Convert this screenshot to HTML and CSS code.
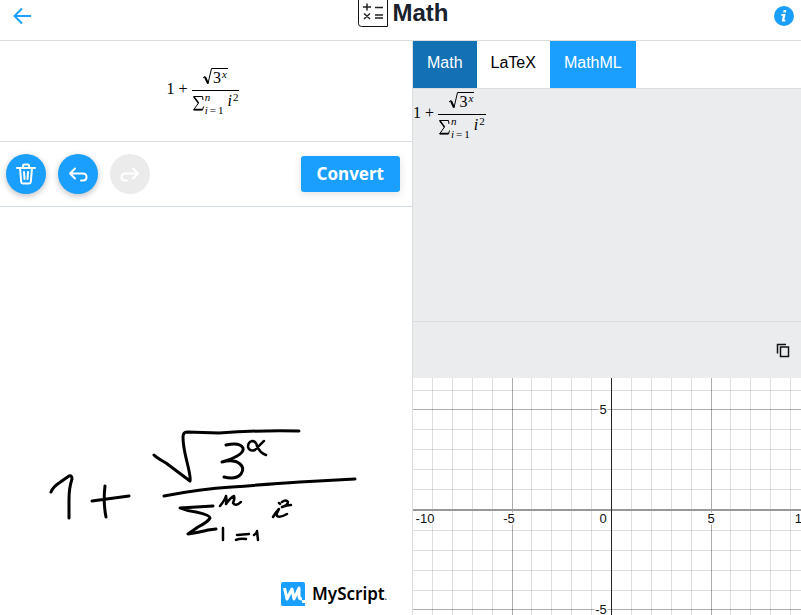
FILE: index.html
```
<!DOCTYPE html>
<html lang="en">
<head>
<meta charset="utf-8">
<title>Math</title>
<link rel="stylesheet" href="styles.css">
</head>
<body>
<header class="topbar">
  <a class="back" href="#" aria-label="Back">
    <svg width="18" height="18" viewBox="0 0 18 18"><path d="M18 9H1.500M9 1.500L1.500 9L9 16.500"/></svg>
  </a>
  <h1 class="title">
    <svg width="30" height="27" viewBox="0 0 30 27"><path class="frame" d="M.5 0V23.500Q.5 26.500 3.500 26.500H29.500V0"/><path d="M5 7H13M9 3.500V10.500M17 7.500H25M6 13.500L12 19M12 13.500L6 19M17 15H25M17 18H25"/></svg>
    <span>Math</span>
  </h1>
  <button class="info" type="button" aria-label="Information">
    <svg width="20" height="20" viewBox="0 0 20 20"><circle cx="10" cy="10" r="10"/><path d="M9.700 4H12.300L11.800 6.400H9.200ZM7.500 8H11.600L10.300 13.700H11.500L11.200 15.400H7.700L8.800 9.700H7.200Z"/></svg>
  </button>
</header>
<main class="workspace">
  <section class="editor">
    <div class="preview">
      <div class="formula">
        <span>1</span><span>+</span>
        <div class="fraction">
          <div class="root"><svg width="9" height="17" viewBox="0 0 9 17"><path d="M0 10L2 8.500L5 15.500L8.500 .5H9"/><path class="heavy" d="M2 9L5 15.500"/></svg><span class="radicand">3<sup>x</sup></span></div>
          <div class="series"><svg class="sigma" width="11" height="15" viewBox="0 0 11 15"><path d="M10 4L9.500 .5H.5L5.500 7L.5 14H9.500L10.500 10.500"/><path class="heavy" d="M1 1L5.500 7M1 13.500H9.500"/></svg><span class="limits"><i>n</i><span class="lower"><i>i</i><span>=</span><span>1</span></span></span><span class="term"><i>i</i><sup>2</sup></span></div>
        </div>
      </div>
    </div>
    <div class="toolbar">
      <button class="round" type="button" aria-label="Clear"><svg width="24" height="24" viewBox="0 0 24 24"><path d="M3 6H21M9 6V4Q9 2.500 10.500 2.500H13.500Q15 2.500 15 4V6M6 6L7.200 20Q7.300 21.500 9 21.500H15Q16.700 21.500 16.800 20L18 6M10 10L10.500 17M14 10L13.500 17"/></svg></button>
      <button class="round" type="button" aria-label="Undo"><svg width="24" height="24" viewBox="0 0 24 24"><path d="M9 6.500L4 11.500L9 16.500M4 11.500H17Q20.500 11.500 20.500 15Q20.500 18.500 17 18.500H15"/></svg></button>
      <button class="round" type="button" aria-label="Redo" disabled><svg width="24" height="24" viewBox="0 0 24 24"><path d="M15 6.500L20 11.500L15 16.500M20 11.500H7Q3.500 11.500 3.500 15Q3.500 18.500 7 18.500H9"/></svg></button>
      <button class="convert" type="button">Convert</button>
    </div>
    <div class="ink">
      <svg class="strokes" viewBox="0 207 412 408" preserveAspectRatio="xMinYMin meet">
        <path d="M51 492Q53 487 59 483L69 476Q72 475 72 479Q69 488 69 499L69 518"/>
        <path d="M92 501L129 496M105 486Q103 502 106 517"/>
        <path d="M154 455Q157 458 166 463L190 481Q191 478 187 462Q183 446 183 437Q183 432 187 432L219 433Q260 430 299 431"/>
        <path d="M164 496Q200 489 232 487Q270 484 300 482L355 479"/>
        <path d="M226 445Q240 442 243 448Q245 455 222 462Q234 459 240 464Q245 468 241 474Q236 480 224 477"/>
        <path class="fine" d="M264 441Q259 446 255 450Q250 452 248 447Q248 442 252 441Q256 441 257 446Q260 453 266 455"/>
        <path d="M213 506Q197 507 180 508Q187 511 196 512Q210 515 210 518Q208 522 198 527L188 534Q201 532 208 530L216 529"/>
        <path class="fine" d="M220 506Q225 500 226 496Q227 499 226 504Q231 497 234 496Q235 499 233 503Q236 507 241 502"/>
        <path class="fine" d="M223 528V540M237 535L249 534M236 540Q240 538 246 539M254 535Q257 533 257 531L258 540"/>
        <path class="fine" d="M279 503L280 504M273 517Q276 512 279 509Q276 514 277 516Q280 518 287 514M282 502Q286 499 288 502Q288 505 282 507Q287 505 291 505"/>
      </svg>
      <div class="brand">
        <svg width="24" height="24" viewBox="0 0 24 24"><path class="tile" d="M2 0H22Q24 0 24 2V18H21V21H24V24H2Q0 24 0 22V2Q0 0 2 0Z"/><path class="mark" d="M3.500 6L6 17L11 7L13 17L18 6V14Q18 17 21 17"/></svg>
        <span>MyScript<small>.</small></span>
      </div>
    </div>
  </section>
  <section class="results">
    <nav class="tabs">
      <button class="tab active" type="button">Math</button>
      <button class="tab plain" type="button">LaTeX</button>
      <button class="tab" type="button">MathML</button>
    </nav>
    <div class="output">
      <div class="formula">
        <span>1</span><span>+</span>
        <div class="fraction">
          <div class="root"><svg width="9" height="17" viewBox="0 0 9 17"><path d="M0 10L2 8.500L5 15.500L8.500 .5H9"/><path class="heavy" d="M2 9L5 15.500"/></svg><span class="radicand">3<sup>x</sup></span></div>
          <div class="series"><svg class="sigma" width="11" height="15" viewBox="0 0 11 15"><path d="M10 4L9.500 .5H.5L5.500 7L.5 14H9.500L10.500 10.500"/><path class="heavy" d="M1 1L5.500 7M1 13.500H9.500"/></svg><span class="limits"><i>n</i><span class="lower"><i>i</i><span>=</span><span>1</span></span></span><span class="term"><i>i</i><sup>2</sup></span></div>
        </div>
      </div>
    </div>
    <div class="actions">
      <button class="copy" type="button" aria-label="Copy"><svg width="14" height="15" viewBox="0 0 14 15"><path d="M1.500 10.500V1.500H10M4.500 4H12.500V13.500H4.500Z"/></svg></button>
    </div>
    <svg class="graph" role="img" aria-label="Coordinate grid">
      <path class="minor" d="M19.500 0V900M39.500 0V900M59.500 0V900M79.500 0V900M118.500 0V900M138.500 0V900M158.500 0V900M178.500 0V900M218.500 0V900M238.500 0V900M258.500 0V900M278.500 0V900M317.500 0V900M337.500 0V900M357.500 0V900M377.500 0V900M0 12.500H1600M0 51.500H1600M0 71.500H1600M0 91.500H1600M0 111.500H1600M0 152.500H1600M0 172.500H1600M0 192.500H1600M0 212.500H1600"/>
      <path class="major" d="M99.500 0V900M298.500 0V900M0 31.500H1600M0 231.500H1600"/>
      <path class="xaxis" d="M0 132H1600"/>
      <path class="yaxis" d="M198.500 0V900"/>
      <g class="ticks">
        <text x="12" y="145">-10</text><text x="96" y="145">-5</text><text x="190" y="145">0</text><text x="298" y="145">5</text><text x="389" y="145">10</text><text x="190" y="36">5</text><text x="188" y="236">-5</text>
      </g>
    </svg>
  </section>
</main>
</body>
</html>
```
FILE: styles.css
```
* { box-sizing: border-box; }

body {
  margin: 0;
  min-height: 100vh;
  display: flex;
  flex-direction: column;
  background: #fff;
  color: #1a202c;
  font-family: "Liberation Sans", Arial, sans-serif;
  font-size: 16px;
}

button {
  border: 0;
  padding: 0;
  font: inherit;
  cursor: pointer;
}

svg { display: block; fill: none; }

.topbar {
  display: grid;
  grid-template-columns: 1fr auto 1fr;
  align-items: start;
  height: 41px;
  border-bottom: 1px solid #dcdddf;
}

.back { justify-self: start; padding: 7px 13px; }
.back svg { stroke: #1a9fff; stroke-width: 2; }

.title {
  display: flex;
  gap: 5px;
  margin: 0;
  padding-left: 5px;
  font-size: 24px;
  line-height: 26px;
}

.title svg { stroke: #222; stroke-width: 1.5; }
.title .frame { stroke: #111; stroke-width: 1; }

.info { justify-self: end; padding: 6px 7px; background: none; }
.info circle { fill: #1a9fff; }
.info path { fill: #fff; }

.workspace {
  flex: 1;
  display: grid;
  grid-template-columns: minmax(0, 1.0644fr) minmax(0, 1fr);
}

.editor,
.results { display: flex; flex-direction: column; }

.editor { border-right: 1px solid #dcdddf; }

.preview {
  display: flex;
  justify-content: center;
  padding: 24px 6px 24px 0;
  height: 101px;
  border-bottom: 1px solid #dcdddf;
}

.formula {
  display: flex;
  align-items: flex-start;
  gap: 4px;
  color: #000;
  font-family: "Liberation Serif", "Times New Roman", serif;
  font-size: 16px;
  line-height: 16px;
}

.formula > span { padding-top: 16px; }
.formula sup { font-size: 11px; line-height: 1; font-style: italic; vertical-align: 5px; }

.fraction { display: flex; flex-direction: column; align-items: center; }
.root { display: flex; padding: 3px 0 5px; }
.root svg,
.sigma { stroke: #000; stroke-width: 1; }
.root .heavy { stroke-width: 2; }
.sigma .heavy { stroke-width: 1.5; }
.radicand { height: 17px; border-top: 1px solid #000; line-height: 17px; padding: 0 1px; white-space: nowrap; }
.radicand sup { padding-left: 1px; }

.series {
  display: flex;
  align-items: flex-start;
  border-top: 1px solid #000;
  padding: 0 1px;
}

.sigma { margin-top: 5px; }
.limits {
  display: flex;
  flex-direction: column;
  gap: 1px;
  padding-left: 1px;
  font-size: 11px;
  line-height: 12px;
}
.lower { display: flex; gap: 2px; }
.term { padding-left: 4px; line-height: 20px; white-space: nowrap; }
.term sup { font-style: normal; padding-left: 1px; }

.toolbar {
  display: flex;
  align-items: center;
  gap: 12px;
  padding: 12px 12px 12px 6px;
  border-bottom: 1px solid #d5dbe2;
}

.round {
  display: grid;
  place-items: center;
  width: 40px;
  height: 40px;
  border-radius: 50%;
  background: #1a9fff;
  box-shadow: 0 2px 6px rgba(0, 0, 0, .25);
}

.round svg {
  stroke: #fff;
  stroke-width: 2;
  stroke-linecap: round;
  stroke-linejoin: round;
}

.round:disabled { background: #ebebeb; box-shadow: none; }

.convert {
  margin-left: auto;
  padding: 0 16px 2px;
  height: 36px;
  border-radius: 3px;
  background: #1a9fff;
  color: #fff;
  font-family: "Noto Sans", sans-serif;
  font-size: 17px;
  font-weight: 700;
  box-shadow: 0 2px 8px rgba(0, 0, 0, .12);
}

.ink {
  position: relative;
  flex: 1;
  display: flex;
  align-items: flex-end;
  justify-content: flex-end;
  padding: 0 25px 9px;
}

.strokes {
  position: absolute;
  inset: 0;
  width: 100%;
  height: 100%;
  stroke: #000;
  stroke-width: 3;
  stroke-linecap: round;
  stroke-linejoin: round;
}

.strokes .fine { stroke-width: 2.5; }

.brand {
  display: flex;
  align-items: center;
  gap: 7px;
  color: #000;
  font-family: "Noto Sans", sans-serif;
  font-size: 17px;
  font-weight: 600;
  line-height: 24px;
}

.brand small { font-size: 8px; line-height: 1; }
.brand .tile { fill: #1a9fff; }
.brand .mark { stroke: #fff; stroke-width: 3; stroke-linejoin: round; }

.tabs { display: flex; height: 48px; border-bottom: 1px solid #dcdddf; }
.tab { padding: 0 14px 4px; background: #1a9fff; color: #fff; }
.tab.active { background: #1270b3; }
.tab.plain { background: #fff; color: #000; }

.output { height: 232px; background: #ebecee; }

.actions {
  display: flex;
  align-items: center;
  justify-content: flex-end;
  height: 57px;
  padding-right: 11px;
  border-top: 1px solid #dcdddf;
  background: #ebecee;
}

.copy { background: none; }
.copy svg { stroke: #111; stroke-width: 1.5; }

.graph { flex: 1; width: 100%; min-height: 237px; overflow: hidden; }
.minor { stroke: #000; stroke-opacity: .13; }
.major { stroke: #000; stroke-opacity: .32; }
.xaxis { stroke: #999; stroke-width: 2; }
.yaxis { stroke: #222; }
.ticks {
  fill: #111;
  stroke: #fff;
  stroke-width: 3;
  paint-order: stroke;
  font-size: 13px;
  text-anchor: middle;
}
```
